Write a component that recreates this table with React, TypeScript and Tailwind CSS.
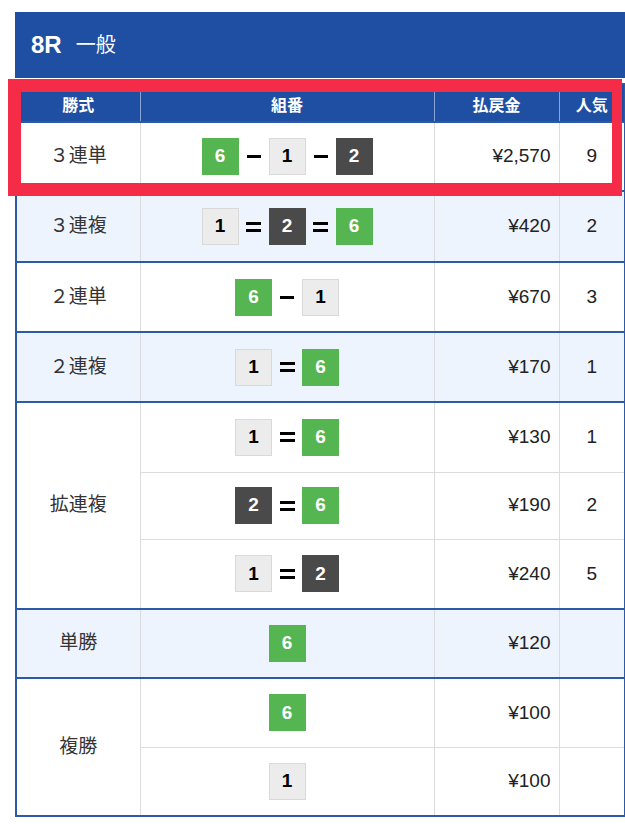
import React from "react";

type Color = "g" | "w" | "d";

const boxClass: Record<Color, string> = {
  g: "bg-[#55b550] text-white border-[#55b550]",
  w: "bg-[#ececec] text-black border-[#d9d9d9]",
  d: "bg-[#4a4a4a] text-white border-[#4a4a4a]",
};

function Box({ n, c }: { n: string; c: Color }) {
  return (
    <span
      className={`inline-flex h-[37px] w-[37px] items-center justify-center border text-[19px] font-bold ${boxClass[c]}`}
    >
      {n}
    </span>
  );
}

function Dash() {
  return (
    <span className="flex w-[30px] items-center justify-center">
      <span className="h-[3px] w-[14px] bg-black" />
    </span>
  );
}

function Eq() {
  return (
    <span className="flex w-[30px] flex-col items-center justify-center gap-[4px]">
      <span className="h-[3px] w-[15px] bg-black" />
      <span className="h-[3px] w-[15px] bg-black" />
    </span>
  );
}

type Combo = { items: [string, Color][]; sep?: "-" | "=" };

function ComboCell({ items, sep }: Combo) {
  return (
    <div className="flex items-center justify-center">
      {items.map(([n, c], i) => (
        <React.Fragment key={i}>
          {i > 0 && (sep === "=" ? <Eq /> : <Dash />)}
          <Box n={n} c={c} />
        </React.Fragment>
      ))}
    </div>
  );
}

type Group = {
  name: string;
  rows: { combo: Combo; pay: string; pop: string; h: string }[];
};

const groups: Group[] = [
  { name: "３連単", rows: [{ combo: { items: [["6", "g"], ["1", "w"], ["2", "d"]], sep: "-" }, pay: "¥2,570", pop: "9", h: "h-[69px]" }] },
  { name: "３連複", rows: [{ combo: { items: [["1", "w"], ["2", "d"], ["6", "g"]], sep: "=" }, pay: "¥420", pop: "2", h: "h-[71px]" }] },
  { name: "２連単", rows: [{ combo: { items: [["6", "g"], ["1", "w"]], sep: "-" }, pay: "¥670", pop: "3", h: "h-[70px]" }] },
  { name: "２連複", rows: [{ combo: { items: [["1", "w"], ["6", "g"]], sep: "=" }, pay: "¥170", pop: "1", h: "h-[70px]" }] },
  {
    name: "拡連複",
    rows: [
      { combo: { items: [["1", "w"], ["6", "g"]], sep: "=" }, pay: "¥130", pop: "1", h: "h-[70px]" },
      { combo: { items: [["2", "d"], ["6", "g"]], sep: "=" }, pay: "¥190", pop: "2", h: "h-[67px]" },
      { combo: { items: [["1", "w"], ["2", "d"]], sep: "=" }, pay: "¥240", pop: "5", h: "h-[70px]" },
    ],
  },
  { name: "単勝", rows: [{ combo: { items: [["6", "g"]] }, pay: "¥120", pop: "", h: "h-[69px]" }] },
  {
    name: "複勝",
    rows: [
      { combo: { items: [["6", "g"]] }, pay: "¥100", pop: "", h: "h-[69px]" },
      { combo: { items: [["1", "w"]] }, pay: "¥100", pop: "", h: "h-[69px]" },
    ],
  },
];

export default function App() {
  return (
    <div className="relative h-[824px] w-[625px] overflow-hidden bg-white font-['Liberation_Sans','Noto_Sans_CJK_JP',sans-serif] text-[#222]">
      <div className="ml-[15px] mt-[12px] flex h-[66px] items-center gap-[14px] bg-[#1f4fa3] pl-[16px] text-white">
        <span className="text-[24px] font-bold">8R</span>
        <span className="text-[20px]">一般</span>
      </div>

      <table className="ml-[15px] mt-[5px] w-[609px] table-fixed border-collapse border-2 border-[#2c5aa8]">
        <colgroup>
          <col className="w-[124px]" />
          <col className="w-[294px]" />
          <col className="w-[125px]" />
          <col className="w-[66px]" />
        </colgroup>
        <thead>
          <tr className="h-[38px] bg-[#1f4fa3] text-[16px] font-bold text-white">
            <th className="border-r border-[#8aa4d4] pt-[6px]">勝式</th>
            <th className="border-r border-[#8aa4d4] pt-[6px]">組番</th>
            <th className="border-r border-[#8aa4d4] pt-[6px]">払戻金</th>
            <th className="pt-[6px]">人気</th>
          </tr>
        </thead>
        <tbody className="text-[19px]">
          {groups.map((g, gi) =>
            g.rows.map((r, ri) => (
              <tr
                key={`${gi}-${ri}`}
                className={`${r.h} ${gi % 2 === 1 ? "bg-[#eef4fd]" : "bg-white"} ${
                  ri === 0 ? "border-t-2 border-[#2c5aa8]" : "border-t border-[#dcdcdc]"
                }`}
              >
                {ri === 0 && (
                  <td rowSpan={g.rows.length} className="border-r border-[#dcdcdc] text-center text-[#333]">
                    {g.name}
                  </td>
                )}
                <td className="border-r border-[#dcdcdc]">
                  <ComboCell {...r.combo} />
                </td>
                <td className="border-r border-[#dcdcdc] pr-[8px] text-right">{r.pay}</td>
                <td className="text-center">{r.pop}</td>
              </tr>
            ))
          )}
        </tbody>
      </table>

      <div className="absolute left-[8px] top-[79px] h-[117px] w-[614px] border-[13px] border-r-[10px] border-[#f52c47]" />
    </div>
  );
}
